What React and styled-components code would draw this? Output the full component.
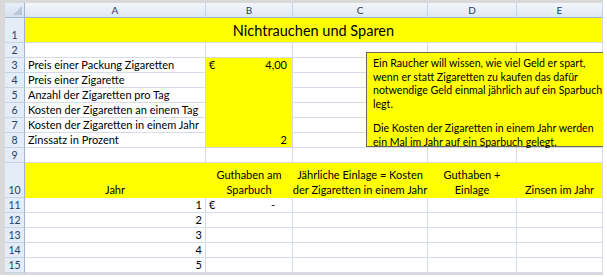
import React from 'react';
import styled, { createGlobalStyle, css } from 'styled-components';

const GlobalStyle = createGlobalStyle`
  html, body {
    margin: 0;
    padding: 0;
    background: #ffffff;
  }
  body {
    font-family: Lato, "Open Sans", sans-serif;
  }
`;

const Frame = styled.div`
  width: 607px;
  height: 277px;
  box-sizing: border-box;
  padding: 3px 4px 0 5px;
  background: linear-gradient(#d9d9d9, #d9d9d9) no-repeat;
  background-size: 603px 275px;
  overflow: hidden;
`;

const Sheet = styled.div`
  position: relative;
  width: 598px;
  height: 270px;
  display: grid;
  grid-template-columns: 20px 181px 87px 135px 89px 86px;
  grid-template-rows: 15px 25px repeat(8, 15px) 35px repeat(5, 15px);
  background: #ffffff;
  overflow: hidden;
  color: #000000;
  font-size: 11px;
`;

const Corner = styled.div`
  position: relative;
  background: linear-gradient(#e9eff8, #d6e0ee);
  border-right: 1px solid #9eb6ce;
  border-bottom: 1px solid #9eb6ce;
  &::after {
    content: '';
    position: absolute;
    right: 2px;
    bottom: 2px;
    border-left: 9px solid transparent;
    border-bottom: 9px solid #b7c8dd;
  }
`;

const ColHead = styled.div`
  display: flex;
  align-items: center;
  justify-content: center;
  background: linear-gradient(#f3f6fb, #dfe7f2);
  border-right: 1px solid #c5d3e4;
  border-bottom: 1px solid #9eb6ce;
  color: #27415f;
  font-size: 10px;
`;

const RowHead = styled.div`
  display: flex;
  align-items: flex-end;
  justify-content: center;
  background: #e4ecf7;
  border-right: 1px solid #9eb6ce;
  border-bottom: 1px solid #c5d3e4;
  color: #27415f;
  font-size: 10.5px;
  line-height: 14px;
`;

const Cell = styled.div`
  display: flex;
  align-items: flex-end;
  justify-content: ${(p) => p.$align || 'flex-start'};
  padding: 0 3px;
  border-right: 1px solid ${(p) => (p.$fill && !p.$edge ? p.$fill : '#d5dce8')};
  border-bottom: 1px solid ${(p) => (p.$fill && !p.$last ? p.$fill : '#d5dce8')};
  background: ${(p) => p.$fill || '#ffffff'};
  line-height: ${(p) => (p.$tall ? '15px' : '14px')};
  white-space: nowrap;
  text-align: ${(p) => (p.$align === 'center' ? 'center' : 'left')};
  ${(p) =>
    p.$span &&
    css`
      grid-column: span ${p.$span};
    `}
`;

const Title = styled(Cell)`
  align-items: center;
  justify-content: center;
  font-size: 14.5px;
  padding-top: 1px;
`;

const Money = styled.span`
  display: flex;
  justify-content: space-between;
  width: 100%;
  padding-right: 2px;
`;

const Note = styled.div`
  position: absolute;
  left: 361px;
  top: 49px;
  width: 250px;
  height: 95px;
  box-sizing: border-box;
  background: #ffff00;
  border: 1px solid #6b6b4f;
  padding: 4px 6px;
  font-size: 10.6px;
  line-height: 13.6px;
  white-space: nowrap;
  p {
    margin: 0 0 11px;
  }
`;

const YELLOW = '#ffff00';
const cols = ['A', 'B', 'C', 'D', 'E'];

const labels = [
  'Preis einer Packung Zigaretten',
  'Preis einer Zigarette',
  'Anzahl der Zigaretten pro Tag',
  'Kosten der Zigaretten an einem Tag',
  'Kosten der Zigaretten in einem Jahr',
  'Zinssatz in Prozent',
];

const Blank = ({ n }) =>
  Array.from({ length: n }, (_, i) => <Cell key={i} />);

export default function App() {
  return (
    <>
      <GlobalStyle />
      <Frame>
        <Sheet>
          <Corner />
          {cols.map((c) => (
            <ColHead key={c}>{c}</ColHead>
          ))}

          <RowHead>1</RowHead>
          <Title $span={5} $fill={YELLOW} $edge $last>
            Nichtrauchen und Sparen
          </Title>

          <RowHead>2</RowHead>
          <Blank n={5} />

          {labels.map((label, i) => {
            const row = i + 3;
            const last = row === 8;
            let value = null;
            if (row === 3) value = <Money><span>€</span><span>4,00</span></Money>;
            if (row === 8) value = <Money><span /><span>2</span></Money>;
            return (
              <React.Fragment key={row}>
                <RowHead>{row}</RowHead>
                <Cell>{label}</Cell>
                <Cell $fill={YELLOW} $edge $last={last}>{value}</Cell>
                <Blank n={3} />
              </React.Fragment>
            );
          })}

          <RowHead>9</RowHead>
          <Blank n={5} />

          <RowHead>10</RowHead>
          <Cell $tall $fill={YELLOW} $align="center">Jahr</Cell>
          <Cell $tall $fill={YELLOW} $align="center">Guthaben am<br />Sparbuch</Cell>
          <Cell $tall $fill={YELLOW} $align="center">Jährliche Einlage = Kosten<br />der Zigaretten in einem Jahr</Cell>
          <Cell $tall $fill={YELLOW} $align="center">Guthaben +<br />Einlage</Cell>
          <Cell $tall $fill={YELLOW} $align="center" $edge>Zinsen im Jahr</Cell>

          {[1, 2, 3, 4, 5].map((year) => (
            <React.Fragment key={year}>
              <RowHead>{year + 10}</RowHead>
              <Cell $align="flex-end">{year}</Cell>
              <Cell>
                {year === 1 && (
                  <Money><span>€</span><span style={{ paddingRight: 12 }}>-</span></Money>
                )}
              </Cell>
              <Blank n={3} />
            </React.Fragment>
          ))}

          <Note>
            <p>
              Ein Raucher will wissen, wie viel Geld er spart,<br />
              wenn er statt Zigaretten zu kaufen das dafür<br />
              notwendige Geld einmal jährlich auf ein Sparbuch<br />
              legt.
            </p>
            <p>
              Die Kosten der Zigaretten in einem Jahr werden<br />
              ein Mal im Jahr auf ein Sparbuch gelegt.
            </p>
          </Note>
        </Sheet>
      </Frame>
    </>
  );
}
